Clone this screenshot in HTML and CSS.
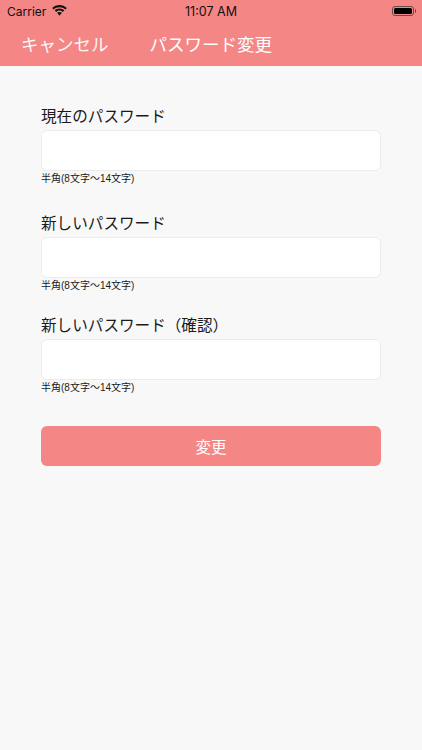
FILE: index.html
```html
<!DOCTYPE html>
<html lang="ja">
<head>
<meta charset="utf-8">
<title>パスワード変更</title>
<link rel="stylesheet" href="styles.css">
</head>
<body>
<header class="header">
  <div class="status">
    <div class="status-left">
      <span>Carrier</span>
      <svg class="wifi" viewBox="0 0 16 12" width="15" height="11"><path d="M8 0C5 0 2.200 1.200 0 3.200l1.600 1.700C3.300 3.300 5.500 2.400 8 2.400s4.700.9 6.400 2.500L16 3.200C13.800 1.200 11 0 8 0z"/><path d="M8 3.800c-2 0-3.800.8-5.200 2l1.600 1.700c1-.9 2.200-1.400 3.600-1.400s2.600.5 3.600 1.400l1.600-1.700c-1.400-1.200-3.200-2-5.200-2z"/><path d="M8 7.500c-1 0-1.900.4-2.600 1L8 11.600l2.600-3.100c-.7-.6-1.600-1-2.600-1z"/></svg>
    </div>
    <div class="status-time">11:07 AM</div>
    <div class="status-right">
      <span class="battery"><span class="battery-fill"></span></span><span class="battery-cap"></span>
    </div>
  </div>
  <nav class="nav">
    <span class="cancel">キャンセル</span>
    <span class="title">パスワード変更</span>
  </nav>
</header>
<main class="form">
  <section class="field">
    <label class="label">現在のパスワード</label>
    <div class="input"></div>
    <p class="hint">半角(8文字〜14文字)</p>
  </section>
  <section class="field">
    <label class="label">新しいパスワード</label>
    <div class="input"></div>
    <p class="hint">半角(8文字〜14文字)</p>
  </section>
  <section class="field">
    <label class="label">新しいパスワード（確認）</label>
    <div class="input"></div>
    <p class="hint">半角(8文字〜14文字)</p>
  </section>
  <div class="button">変更</div>
</main>
</body>
</html>
```
FILE: styles.css
```css
* { box-sizing: border-box; }
html, body { margin: 0; height: 100%; }
body {
  background: #f8f8f8;
  color: #1a1a1a;
  font-family: "Inter", "Liberation Sans", "Noto Sans CJK JP", sans-serif;
  overflow: hidden;
}
.header { background: #f58686; height: 66px; color: #fff; }
.status {
  height: 22px;
  display: flex;
  align-items: center;
  justify-content: space-between;
  padding: 0 6px 0 7px;
  color: #111;
  font-size: 12px;
  position: relative;
}
.status-left { display: flex; align-items: center; gap: 6px; }
.wifi { fill: #111; margin-top: -2px; }
.status-time {
  position: absolute;
  left: 0; right: 0;
  text-align: center;
  font-weight: 400;
  font-size: 12.500px;
}
.status-right { display: flex; align-items: center; }
.battery {
  width: 22px; height: 10px;
  border: 1px solid #6e4a4a;
  border-radius: 3px;
  padding: 1px;
  display: block;
}
.battery-fill { display: block; height: 100%; background: #000; border-radius: 1.500px; }
.battery-cap { width: 1.500px; height: 4px; background: #6e4a4a; border-radius: 0 1px 1px 0; margin-left: 1px; }
.nav {
  height: 44px;
  display: flex;
  align-items: center;
  padding: 0 0 2px 21px;
  font-family: "Noto Sans CJK JP", sans-serif;
  font-size: 17.500px;
}
.cancel { width: 128.500px; opacity: .92; }
.form { padding: 39px 41px 0; display: flex; flex-direction: column; }
.field { display: flex; flex-direction: column; }
.field:nth-of-type(2) { margin-top: 26px; }
.field:nth-of-type(3) { margin-top: 21px; }
.label {
  font-family: "Noto Sans CJK JP", sans-serif;
  font-size: 15.600px;
  line-height: 20px;
  height: 25px;
}
.input {
  height: 41px;
  background: #fff;
  border: 1px solid #ececec;
  border-radius: 6px;
}
.hint {
  margin: 1px 0 0;
  font-family: "Liberation Sans", "Noto Sans CJK JP", sans-serif;
  font-size: 10px;
  line-height: 14px;
}
.button {
  margin-top: 31px;
  height: 40px;
  background: #f58686;
  border-radius: 6px;
  color: #fff;
  font-family: "Noto Sans CJK JP", sans-serif;
  font-size: 15.500px;
  display: flex;
  align-items: center;
  justify-content: center;
}
```
